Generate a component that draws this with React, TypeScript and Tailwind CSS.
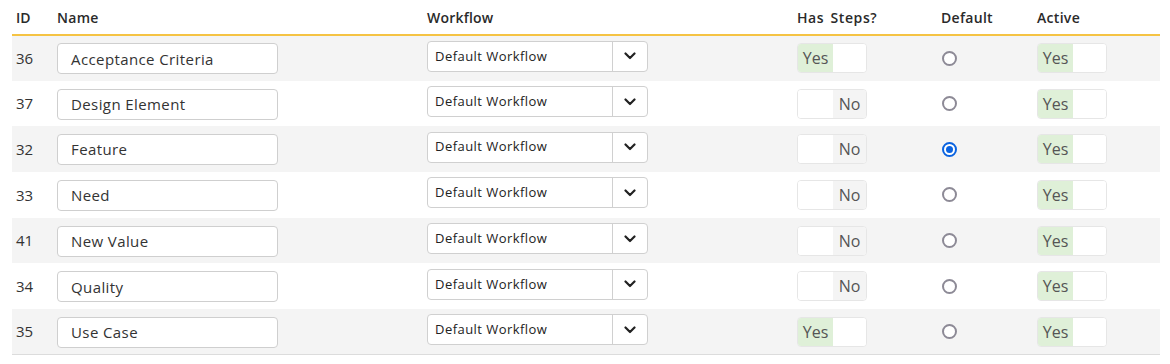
import React from 'react';

type Row = { id: number; name: string; steps: boolean; def: boolean; active: boolean };

const rows: Row[] = [
  { id: 36, name: 'Acceptance Criteria', steps: true, def: false, active: true },
  { id: 37, name: 'Design Element', steps: false, def: false, active: true },
  { id: 32, name: 'Feature', steps: false, def: true, active: true },
  { id: 33, name: 'Need', steps: false, def: false, active: true },
  { id: 41, name: 'New Value', steps: false, def: false, active: true },
  { id: 34, name: 'Quality', steps: false, def: false, active: true },
  { id: 35, name: 'Use Case', steps: true, def: false, active: true },
];

function Toggle({ on }: { on: boolean }) {
  return (
    <div className="flex w-[70px] h-[30px] rounded-[4px] border border-[#e6e6e6] overflow-hidden bg-white text-[16px] text-[#555]">
      {on ? (
        <>
          <div className="w-[35px] bg-[#dff0d8] flex items-center justify-center">Yes</div>
          <div className="flex-1 bg-white" />
        </>
      ) : (
        <>
          <div className="w-[35px] bg-white" />
          <div className="flex-1 bg-[#f4f4f4] flex items-center justify-center">No</div>
        </>
      )}
    </div>
  );
}

function Radio({ on }: { on: boolean }) {
  return on ? (
    <div className="ml-px w-[15px] h-[15px] rounded-full border-[2px] border-[#0a63e0] flex items-center justify-center bg-white">
      <div className="w-[7px] h-[7px] rounded-full bg-[#0a63e0]" />
    </div>
  ) : (
    <div className="ml-px w-[15px] h-[15px] rounded-full border-[2px] border-[#8d8a96] bg-white" />
  );
}

function Select() {
  return (
    <div className="-mt-[4px] flex w-[221px] h-[31px] rounded-[4px] border border-[#d0d0d0] bg-white text-[13px] tracking-[0.45px] text-[#222]">
      <div className="flex-1 flex items-center pl-[7px]">Default Workflow</div>
      <div className="w-[35px] border-l border-[#d0d0d0] flex items-center justify-center">
        <svg width="12" height="8" viewBox="0 0 12 8" fill="none">
          <path d="M1.5 1.5L6 6L10.5 1.5" stroke="#222" strokeWidth="2.2" strokeLinecap="round" strokeLinejoin="round" />
        </svg>
      </div>
    </div>
  );
}

export default function App() {
  return (
    <div className="w-[1170px] h-[364px] bg-white px-[12px] pr-[10px]" style={{ fontFamily: '"Open Sans", "Noto Sans", sans-serif' }}>
      <table className="w-full border-collapse">
        <thead>
          <tr className="h-[35px] border-b-[2px] border-[#f5c343] text-[14px] text-[#2a2a2a] text-left">
            <th className="w-[45px] pl-[4px] font-semibold">ID</th>
            <th className="w-[370px] font-semibold tracking-[0.3px]">Name</th>
            <th className="w-[370px] font-semibold tracking-[0.2px]">Workflow</th>
            <th className="w-[144px] font-semibold tracking-[0.6px] [word-spacing:2px]">Has Steps?</th>
            <th className="w-[96px] font-semibold tracking-[0.3px]">Default</th>
            <th className="font-semibold tracking-[0.3px]">Active</th>
          </tr>
        </thead>
        <tbody>
          {rows.map((r, i) => (
            <tr key={r.id} className={`h-[45.7px] ${i % 2 === 0 ? 'bg-[#f4f4f4]' : 'bg-white'} ${i === rows.length - 1 ? 'border-b border-[#dcdcdc]' : ''}`}>
              <td className="pl-[4px] text-[15px] text-[#333]">{r.id}</td>
              <td>
                <div className="w-[221px] h-[31px] mt-[1px] rounded-[4px] border border-[#cfcfcf] bg-white flex items-center pl-[13px] text-[15px] tracking-[0.4px] text-[#333]">
                  {r.name}
                </div>
              </td>
              <td>
                <Select />
              </td>
              <td>
                <Toggle on={r.steps} />
              </td>
              <td>
                <Radio on={r.def} />
              </td>
              <td>
                <Toggle on={r.active} />
              </td>
            </tr>
          ))}
        </tbody>
      </table>
    </div>
  );
}
